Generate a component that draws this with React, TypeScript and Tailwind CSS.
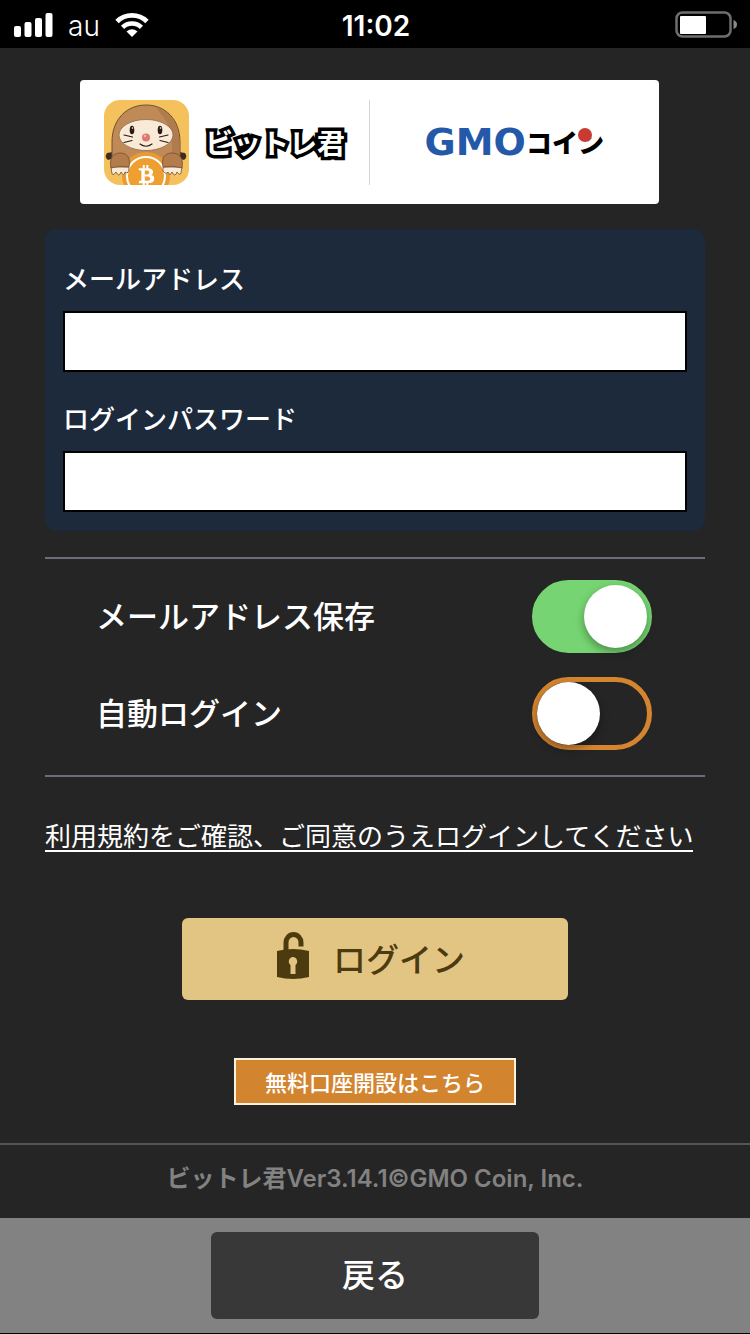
import { useState } from "react";
import { FaBtc } from "react-icons/fa";

const jp = "font-['Noto_Sans_CJK_JP','Noto_Sans',sans-serif]";

const StatusBar = () => (
  <div className="grid h-12 grid-cols-3 items-center bg-black pt-0.5 pr-3 pl-3.5 text-white">
    <div className="flex items-center gap-[15px]">
      <svg width="39" height="24" viewBox="0 0 39 24" fill="#fff" aria-hidden="true">
        <rect x="0" y="13" width="7" height="11" rx="2" />
        <rect x="10.500" y="9" width="7" height="15" rx="2" />
        <rect x="21" y="5" width="7" height="19" rx="2" />
        <rect x="31.500" y="0" width="7" height="24" rx="2" />
      </svg>
      <span className="pt-0.5 font-['Inter',sans-serif] text-[28px] leading-8 font-light">au</span>
      <svg width="34" height="24" viewBox="0 0 34 24" aria-hidden="true">
        <path d="M2 8.500 A21.500 21.500 0 0 1 32 8.500" fill="none" stroke="#fff" strokeWidth="4.800" />
        <path d="M7.600 14.300 A13.500 13.500 0 0 1 26.400 14.300" fill="none" stroke="#fff" strokeWidth="4.600" />
        <path d="M11.500 18.500 Q17 13.800 22.500 18.500 L17 24 Z" fill="#fff" />
      </svg>
    </div>
    <span className="pt-0.5 text-center font-['Inter',sans-serif] text-[28px] leading-8 font-semibold">
      11:02
    </span>
    <svg className="justify-self-end" width="63" height="28" viewBox="0 0 63 28" aria-hidden="true">
      <rect x="1.500" y="1.500" width="54" height="24" rx="6" fill="none" stroke="#6e6e6e" strokeWidth="2.500" />
      <rect x="5" y="5" width="26" height="18" rx="1" fill="#fff" />
      <path d="M58.500 9 Q62 10.500 62 13.500 T58.500 18 Z" fill="#8a8a8a" />
    </svg>
  </div>
);

const MoleIcon = () => (
  <svg width="85" height="85" viewBox="0 0 85 85" role="img" aria-label="ビットレ君">
    <defs>
      <clipPath id="mole-clip">
        <rect width="85" height="85" rx="16" />
      </clipPath>
    </defs>
    <g clipPath="url(#mole-clip)">
      <rect width="85" height="85" fill="#f4c15d" />
      <path d="M9 52 L3 53 Q0 57 4 60 L10 58 Z" fill="#3d2b20" />
      <path d="M75 52 L81 53 Q84 57 80 60 L74 58 Z" fill="#3d2b20" />
      <path d="M8 62 V42 C8 19 23 5 42 5 S76 19 76 42 V62 Z" fill="#bf8a58" stroke="#705031" strokeWidth="1" />
      <path d="M51 6.500 C67 11 75.500 26 75.500 42 V61 H68 V38 C66 24 60 18 51 6.500 Z" fill="#b07c4d" />
      <ellipse cx="42" cy="35" rx="27" ry="15.500" fill="#f8ead6" stroke="#8a6040" strokeWidth=".7" />
      <ellipse cx="28" cy="30" rx="2.300" ry="4.300" fill="#2a1c14" />
      <ellipse cx="56" cy="30" rx="2.300" ry="4.300" fill="#2a1c14" />
      <circle cx="28.500" cy="28" r=".8" fill="#fff" />
      <circle cx="56.500" cy="28" r=".8" fill="#fff" />
      <circle cx="42" cy="37.500" r="4" fill="#dd7774" />
      <circle cx="41" cy="36" r="1.300" fill="#f3b5b0" />
      <path
        d="M36 44 Q42 48.500 48 44 M20 35 L28.500 37 M20 42.500 L28 40.500 M64 35 L55.500 37 M64 42.500 L56 40.500"
        fill="none"
        stroke="#2a1c14"
        strokeWidth="1.200"
        strokeLinecap="round"
      />
      <circle cx="42" cy="76" r="24" fill="#e89b33" />
      <circle cx="42" cy="76" r="19" fill="#ef9f2f" stroke="#fff" strokeWidth="2" />
      <path d="M7 67 L8 74 Q10 76 12 72 Q15 78 17 72 Q20 77 21 72 Q25 75 25 67 Z" fill="#f8ead6" stroke="#705031" strokeWidth=".8" />
      <path d="M59 67 L59 71 Q62 75 64 72 Q66 77 68 72 Q71 78 73 72 Q76 76 77 73 L78 67 Z" fill="#f8ead6" stroke="#705031" strokeWidth=".8" />
      <path d="M7 68 C5 58 9 53 16 53 S27 58 25 67 Q15 65 7 68 Z" fill="#b47c4c" stroke="#705031" strokeWidth=".8" />
      <path d="M78 68 C80 58 75 53 68 53 S57 58 59 67 Q69 65 78 68 Z" fill="#b47c4c" stroke="#705031" strokeWidth=".8" />
      <FaBtc x="32" y="65" size={21} color="#fff" />
    </g>
  </svg>
);

const LogoCard = () => (
  <div className="mr-[91px] ml-20 flex h-[124px] items-center rounded bg-white">
    <div className="flex h-[85px] w-1/2 items-center gap-4 border-r border-gray-300 pl-6">
      <MoleIcon />
      <span className="text-[28px] leading-9 font-bold whitespace-nowrap text-white [-webkit-text-stroke:7px_#000] [paint-order:stroke_fill] [text-shadow:2px_2px_0_#000]">
        ビットレ君
      </span>
    </div>
    <div className="flex w-1/2 items-center justify-center whitespace-nowrap">
      <span className="font-['DejaVu_Sans',sans-serif] text-[38px] leading-9 font-bold text-[#2459a9]">GMO</span>
      <span className="relative text-[26px] leading-9 font-black text-black">
        コイン
        <span className="absolute top-1 right-3 size-3.5 rounded-full bg-[#c93a32]" />
      </span>
    </div>
  </div>
);

type FieldProps = { id: string; label: string; type: string };

const Field = ({ id, label, type }: FieldProps) => (
  <div className="flex flex-col gap-[15px]">
    <label htmlFor={id} className="text-[26px] leading-9 font-medium text-white">
      {label}
    </label>
    <input
      id={id}
      type={type}
      className="h-[61px] w-full border-2 border-black bg-white px-3 text-[26px] text-black outline-none"
    />
  </div>
);

type ToggleProps = {
  id: string;
  label: string;
  checked: boolean;
  onChange: (value: boolean) => void;
};

const Toggle = ({ id, label, checked, onChange }: ToggleProps) => (
  <div className="flex items-center justify-between">
    <label htmlFor={id} className="pb-1 text-[31px] leading-10 font-medium text-white">
      {label}
    </label>
    <input
      id={id}
      type="checkbox"
      role="switch"
      checked={checked}
      onChange={(e) => onChange(e.target.checked)}
      className="flex h-[73px] w-[120px] shrink-0 cursor-pointer appearance-none rounded-full border-[5px] border-[#d5852f] before:size-[63px] before:rounded-full before:bg-white before:shadow-[0_4px_10px_rgba(0,0,0,0.35)] before:transition-transform before:content-[''] checked:border-[#76d572] checked:bg-[#76d572] checked:before:translate-x-[47px]"
    />
  </div>
);

const UnlockIcon = () => (
  <svg className="mb-1.5" width="32" height="48" viewBox="0 0 32 48" aria-hidden="true">
    <path d="M9 19 V10.500 A7.500 8 0 0 1 24 10.500 V14.500" fill="none" stroke="#4d3b10" strokeWidth="5" />
    <path
      fillRule="evenodd"
      d="M0 19 Q16 15 32 19 V45 Q16 49 0 45 Z M16 25 A4.500 4.500 0 0 0 13.500 33 V42 H18.500 V33 A4.500 4.500 0 0 0 16 25 Z"
      fill="#4d3b10"
    />
  </svg>
);

const App = () => {
  const [saveMail, setSaveMail] = useState(true);
  const [autoLogin, setAutoLogin] = useState(false);

  return (
    <div className={`flex min-h-screen flex-col bg-[#252525] ${jp}`}>
      <StatusBar />

      <main className="flex flex-1 flex-col pt-8">
        <LogoCard />

        <form className="mx-[45px] mt-[25px] flex flex-col" onSubmit={(e) => e.preventDefault()}>
          <div className="flex flex-col gap-7 rounded-xl bg-[#1c2a3c] px-[18px] pt-[31px] pb-[19px]">
            <Field id="email" label="メールアドレス" type="email" />
            <Field id="password" label="ログインパスワード" type="password" />
          </div>

          <div className="mt-[26px] flex flex-col gap-6 border-y-2 border-[#6d6c7c] pt-[21px] pr-[53px] pb-[25px] pl-[51px]">
            <Toggle id="save-mail" label="メールアドレス保存" checked={saveMail} onChange={setSaveMail} />
            <Toggle id="auto-login" label="自動ログイン" checked={autoLogin} onChange={setAutoLogin} />
          </div>

          <a
            href="#terms"
            className="mt-[43px] self-start border-b-2 border-white text-[26px] leading-[30px] text-white"
          >
            利用規約をご確認、ご同意のうえログインしてください
          </a>

          <button
            type="submit"
            className="mt-[66px] flex h-[82px] w-[386px] max-w-full cursor-pointer items-center justify-center gap-6 self-center rounded-md bg-[#e3c583] pr-2 text-[33px] font-medium text-[#4d3b10]"
          >
            <UnlockIcon />
            ログイン
          </button>
        </form>

        <button
          type="button"
          className="mt-[58px] h-[47px] w-[282px] cursor-pointer self-center border-2 border-[#fdf3dc] bg-[#d3842f] pb-0.5 text-[22px] leading-8 font-medium text-white"
        >
          無料口座開設はこちら
        </button>

        <footer className="mt-[38px] border-t-2 border-[#555] pt-4 pb-5 text-center font-['Inter','Noto_Sans_CJK_JP',sans-serif] text-[24px] leading-9 font-semibold text-[#828282]">
          ビットレ君Ver3.14.1©GMO Coin, Inc.
        </footer>
      </main>

      <nav className="flex justify-center border-b border-black bg-[#828282] py-3.5">
        <button
          type="button"
          className="h-[87px] w-[328px] cursor-pointer rounded-md bg-[#383838] pb-1 text-[33px] font-medium text-white"
        >
          戻る
        </button>
      </nav>
    </div>
  );
};

export default App;
